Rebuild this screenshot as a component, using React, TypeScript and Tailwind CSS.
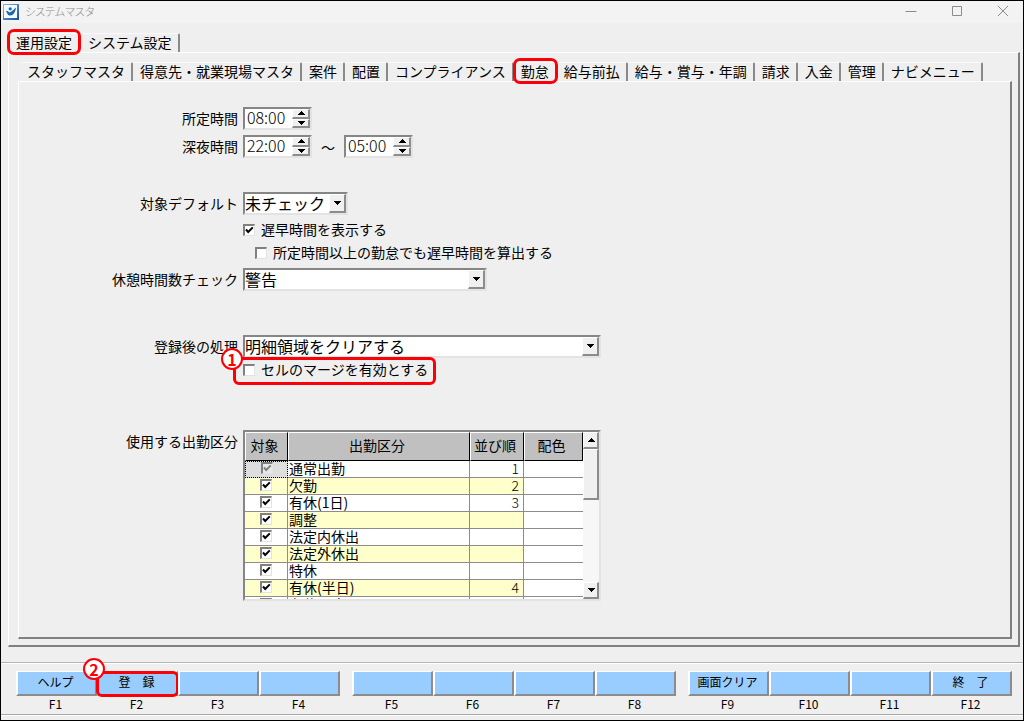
import { useState } from "react";
import type { ReactNode } from "react";

const mainTabs = ["運用設定", "システム設定"];

const subTabs = [
  "スタッフマスタ",
  "得意先・就業現場マスタ",
  "案件",
  "配置",
  "コンプライアンス",
  "勤怠",
  "給与前払",
  "給与・賞与・年調",
  "請求",
  "入金",
  "管理",
  "ナビメニュー",
];

const attendanceRows = [
  { name: "通常出勤", order: "1", locked: true },
  { name: "欠勤", order: "2" },
  { name: "有休(1日)", order: "3" },
  { name: "調整", order: "" },
  { name: "法定内休出", order: "" },
  { name: "法定外休出", order: "" },
  { name: "特休", order: "" },
  { name: "有休(半日)", order: "4" },
  { name: "有休(1時間)", order: "" },
];

const functionKeys = [
  ["ヘルプ", "登　録", "", ""],
  ["", "", "", ""],
  ["画面クリア", "", "", "終　了"],
];

const sunken = "border-2 border-t-[#868686] border-l-[#868686] border-r-[#e3e3e3] border-b-[#e3e3e3]";
const raised = "border-t border-l border-r-2 border-b-2 border-t-white border-l-white border-r-[#8c8c8c] border-b-[#8c8c8c] bg-[#f0f0f0]";

function Arrow({ up = false }: { up?: boolean }) {
  return (
    <svg className="h-[4px] w-[8px]" viewBox="0 0 8 4" shapeRendering="crispEdges">
      <path d={up ? "M0 4L4 0L8 4Z" : "M0 0H8L4 4Z"} fill="#000" />
    </svg>
  );
}

function Outline() {
  return (
    <span className="pointer-events-none absolute -top-[5px] -right-[3px] -bottom-[3px] -left-px z-10 rounded-[7px] border-[3px] border-[#fb0007]" />
  );
}

function Marker({ place, children }: { place: string; children: ReactNode }) {
  return (
    <span
      className={`pointer-events-none absolute z-20 flex h-[22px] w-[22px] items-center justify-center rounded-full border-2 border-[#fb0007] bg-white pb-px text-[16px] leading-none font-bold text-[#fb0007] ${place}`}
    >
      {children}
    </span>
  );
}

function TimeInput({ id, initial }: { id: string; initial: string }) {
  const [value, setValue] = useState(initial);

  const shift = (step: number) => {
    const hour = (Number(value.slice(0, 2)) + step + 24) % 24;
    setValue(String(hour).padStart(2, "0") + value.slice(2));
  };

  return (
    <div className={`flex h-[23px] w-[69px] bg-white ${sunken}`}>
      <input
        id={id}
        className="w-0 flex-1 bg-transparent pb-[2px] pl-[2px] text-[16px] leading-[17px] font-light outline-none"
        value={value}
        onChange={(e) => setValue(e.target.value)}
      />
      <div className="flex w-[18px] flex-col">
        <button onClick={() => shift(1)} className={`flex flex-1 items-center justify-center ${raised}`}>
          <Arrow up />
        </button>
        <button onClick={() => shift(-1)} className={`flex flex-1 items-center justify-center ${raised}`}>
          <Arrow />
        </button>
      </div>
    </div>
  );
}

function SelectBox({ id, value, width }: { id: string; value: string; width: string }) {
  return (
    <div className={`relative h-[23px] ${width}`}>
      <select
        id={id}
        className={`h-full w-full appearance-none bg-white pr-[18px] pb-px text-[16px] leading-[18px] outline-none ${sunken}`}
      >
        <option>{value}</option>
      </select>
      <span
        className={`pointer-events-none absolute top-[2px] right-[2px] bottom-[2px] flex w-[17px] items-center justify-center ${raised}`}
      >
        <Arrow />
      </span>
    </div>
  );
}

interface CheckProps {
  checked?: boolean;
  disabled?: boolean;
  labelledBy?: string;
}

function CheckBox({ checked = false, disabled = false, labelledBy }: CheckProps) {
  return (
    <span className="relative block h-[12px] w-[12px] shrink-0">
      <input
        type="checkbox"
        defaultChecked={checked}
        disabled={disabled}
        aria-labelledby={labelledBy}
        className="peer block h-[12px] w-[12px] appearance-none border-t-2 border-r border-b border-l-2 border-t-[#808080] border-r-[#e3e3e3] border-b-[#e3e3e3] border-l-[#808080] bg-white disabled:bg-[#e8e8e8]"
      />
      <svg
        className="pointer-events-none absolute inset-0 hidden text-black peer-checked:block peer-disabled:text-[#808080]"
        viewBox="0 0 12 12"
      >
        <path d="M3 5.5L5.2 8L9.8 3.4" fill="none" stroke="currentColor" strokeWidth="2" />
      </svg>
    </span>
  );
}

function Row({ label, htmlFor, children }: { label: string; htmlFor: string; children: ReactNode }) {
  return (
    <div className="flex items-center">
      <label htmlFor={htmlFor} className="mr-[5px] w-[219px] shrink-0 pb-[2px] text-right">
        {label}
      </label>
      {children}
    </div>
  );
}

function CheckRow({ checked, className, children }: { checked?: boolean; className: string; children: ReactNode }) {
  return (
    <label className={`relative flex h-[18px] w-fit items-center gap-[6px] ${className}`}>
      <CheckBox checked={checked} />
      <span className="pb-[2px]">{children}</span>
    </label>
  );
}

function TitleBar() {
  return (
    <header className="flex h-[22px] shrink-0 items-center bg-[#f3f3f3] pr-[14px] pl-[2px] text-[#8c8c8c]">
      <svg className="h-[16px] w-[16px]" viewBox="0 0 16 16">
        <defs>
          <linearGradient id="frame" x1="0" y1="0" x2="1" y2="1">
            <stop offset="0" stopColor="#8fb8de" />
            <stop offset="1" stopColor="#0a4f9e" />
          </linearGradient>
        </defs>
        <rect width="16" height="16" fill="url(#frame)" />
        <rect x="1" y="1" width="13" height="13" fill="#f4f9fd" />
        <circle cx="7.2" cy="4.8" r="1.6" fill="#1b67b2" />
        <path d="M3 6.8C4.4 6.8 5.6 7.8 6.8 8.6C8.8 7.6 10.6 5.8 13 3.6C12.4 8.2 10.3 11.6 7.4 11.6C4.8 11.6 4 9.2 3 6.8Z" fill="#1b67b2" />
      </svg>
      <h1 className="ml-[6px] flex-1 pb-[2px] text-[11px] font-light [font-feature-settings:'palt']">システムマスタ</h1>
      <div className="flex gap-[34px] pb-[2px]">
        {["M0.5 6.5H11.5", "M1.5 1.5H10.5V10.5H1.5Z", "M1 1L11 11M11 1L1 11"].map((d) => (
          <button key={d} className="h-[12px] w-[12px]">
            <svg viewBox="0 0 12 12" fill="none" stroke="currentColor" strokeWidth="1">
              <path d={d} />
            </svg>
          </button>
        ))}
      </div>
    </header>
  );
}

function Tabs({ items, active, padding }: { items: string[]; active: string; padding: string }) {
  return (
    <nav className="flex whitespace-nowrap">
      {items.map((item) => (
        <button
          key={item}
          className={`relative h-[19px] rounded-t-[2px] border-t border-r-2 border-t-[#fafafa] border-r-[#8a8a8a] pb-[2px] leading-[16px] ${padding}`}
        >
          {item}
          {item === active && <Outline />}
        </button>
      ))}
    </nav>
  );
}

function AttendanceTable() {
  const head = "border-t border-l border-t-white border-l-white border-r border-b border-r-black border-b-black bg-[#c0c0c0] pt-0 pr-[4px] pb-[4px] pl-0 font-normal";
  const cell = "border-r border-b border-[#8c8c8c] py-0 align-top";

  return (
    <div className={`flex h-[171px] w-[358px] overflow-hidden bg-white ${sunken}`}>
      <table className="w-[338px] shrink-0 table-fixed border-separate border-spacing-0 self-start">
        <colgroup>
          <col className="w-[43px]" />
          <col className="w-[182px]" />
          <col className="w-[54px]" />
          <col className="w-[59px]" />
        </colgroup>
        <thead>
          <tr className="h-[29px]">
            <th className={head}>対象</th>
            <th className={head}>出勤区分</th>
            <th className={head}>並び順</th>
            <th className={head}>配色</th>
          </tr>
        </thead>
        <tbody>
          {attendanceRows.map((row, index) => (
            <tr key={row.name} className={`h-[17px] leading-[14px] ${index % 2 ? "bg-[#ffffcc]" : "bg-white"}`}>
              <td className={row.locked ? "border border-dotted border-black bg-[#dedede] p-0 align-top" : `px-0 pt-px! ${cell}`}>
                <div className="flex justify-center">
                  <CheckBox checked disabled={row.locked} labelledBy={`kubun-${index}`} />
                </div>
              </td>
              <td id={`kubun-${index}`} className={`pr-0 pl-px ${cell}`}>
                {row.name}
              </td>
              <td className={`pr-[4px] pl-0 text-right font-light ${cell}`}>{row.order}</td>
              <td className="border-b border-[#8c8c8c] bg-white p-0" />
            </tr>
          ))}
        </tbody>
      </table>
      <div className="flex flex-1 flex-col bg-[#f7f7f7]">
        <button className={`flex h-[17px] items-center justify-center ${raised}`}>
          <Arrow up />
        </button>
        <div className={`h-[51px] ${raised}`} />
        <button className={`mt-auto flex h-[17px] items-center justify-center ${raised}`}>
          <Arrow />
        </button>
      </div>
    </div>
  );
}

function FunctionBar() {
  return (
    <footer className="shrink-0 border-t border-[#b4b4b4] pb-[4px]">
      <div className="flex gap-[12px] border-t border-b border-t-white border-b-[#a8a8a8] pt-[7px] pr-[11px] pl-[15px]">
        {functionKeys.map((group, groupIndex) => (
          <div key={groupIndex} className="flex flex-1">
            {group.map((label, index) => {
              const key = `F${groupIndex * 4 + index + 1}`;
              return (
                <div key={key} className="relative flex-1 text-center text-[12px]">
                  <button
                    aria-labelledby={key}
                    className="block h-[25px] w-full border-t border-r-2 border-b-2 border-l-2 border-t-white border-r-[#8c8c8c] border-b-[#8c8c8c] border-l-white bg-[#99ccff] pr-[2px] leading-[20px]"
                  >
                    <span className="block h-[22px]">{label}</span>
                  </button>
                  <div id={key} className="h-[18px] pr-[2px] leading-[16px]">
                    {key}
                  </div>
                  {key === "F2" && (
                    <div className="pointer-events-none absolute -inset-x-px top-0 h-[26px] rounded-[6px] border-[3px] border-[#fb0007]">
                      <Marker place="-top-[16px] -left-[16px]">2</Marker>
                    </div>
                  )}
                </div>
              );
            })}
          </div>
        ))}
      </div>
      <div className="h-px bg-white" />
    </footer>
  );
}

export default function App() {
  return (
    <div className="flex min-h-screen flex-col border border-black bg-[#efefef] font-['Noto_Sans_CJK_JP',sans-serif] text-[14px] leading-[18px] text-black">
      <TitleBar />

      <main className="mt-[10px] mr-[3px] mb-[15px] ml-[7px] flex flex-1 flex-col">
        <Tabs items={mainTabs} active="運用設定" padding="pr-[6px] pl-[8px]" />
        <section className="flex flex-1 flex-col border-t border-r-2 border-b-2 border-l border-t-white border-r-[#808080] border-b-[#808080] border-l-white pt-[9px] pr-[6px] pb-[6px] pl-[9px]">
          <div className="pl-[2px]">
            <Tabs items={subTabs} active="勤怠" padding="pr-[6px] pl-[7px]" />
          </div>
          <section className="flex-1 border-t border-r-2 border-b-2 border-l border-t-white border-r-[#808080] border-b-[#808080] border-l-white pt-[25px] pb-[30px]">
            <Row label="所定時間" htmlFor="regular">
              <TimeInput id="regular" initial="08:00" />
            </Row>
            <div className="mt-[5px]">
              <Row label="深夜時間" htmlFor="night">
                <TimeInput id="night" initial="22:00" />
                <label htmlFor="night-end" className="w-[32px] text-center">
                  ～
                </label>
                <TimeInput id="night-end" initial="05:00" />
              </Row>
            </div>

            <div className="mt-[34px]">
              <Row label="対象デフォルト" htmlFor="target">
                <SelectBox id="target" value="未チェック" width="w-[105px]" />
              </Row>
            </div>
            <CheckRow checked className="mt-[6px] ml-[224px]">
              遅早時間を表示する
            </CheckRow>
            <CheckRow className="mt-[5px] ml-[236px]">所定時間以上の勤怠でも遅早時間を算出する</CheckRow>
            <div className="mt-[6px]">
              <Row label="休憩時間数チェック" htmlFor="break">
                <SelectBox id="break" value="警告" width="w-[244px]" />
              </Row>
            </div>

            <div className="mt-[44px]">
              <Row label="登録後の処理" htmlFor="after">
                <SelectBox id="after" value="明細領域をクリアする" width="w-[358px]" />
              </Row>
            </div>
            <CheckRow className="mt-[3px] ml-[224px]">
              セルのマージを有効とする
              <span className="pointer-events-none absolute -top-[4px] -right-[8px] -bottom-[6px] -left-[10px] rounded-[6px] border-[3px] border-[#fb0007]">
                <Marker place="-top-[12px] -left-[15px]">1</Marker>
              </span>
            </CheckRow>

            <div className="mt-[51px] flex">
              <span className="mt-[2px] mr-[5px] w-[219px] shrink-0 text-right">使用する出勤区分</span>
              <AttendanceTable />
            </div>
          </section>
        </section>
      </main>

      <FunctionBar />
    </div>
  );
}
